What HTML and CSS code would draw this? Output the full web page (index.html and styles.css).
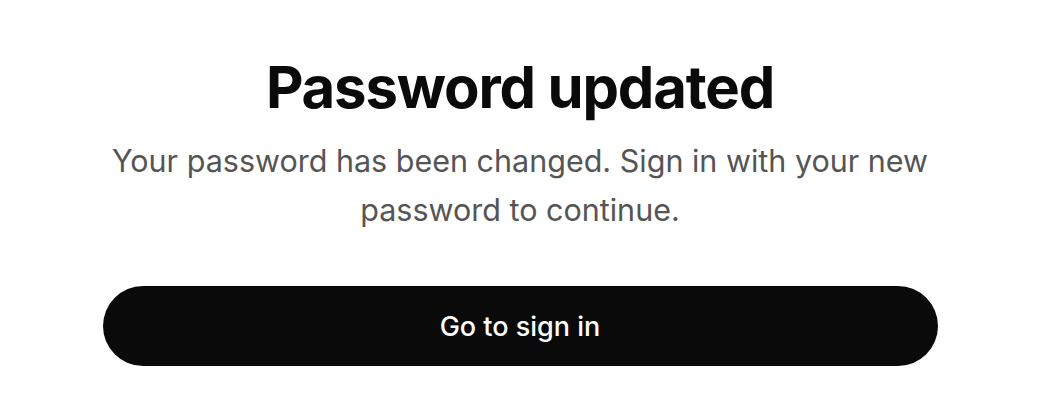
FILE: index.html
```html
<!DOCTYPE html>
<html lang="en">
<head>
<meta charset="utf-8">
<title>Password updated</title>
<link rel="stylesheet" href="styles.css">
</head>
<body>
<main class="card">
  <h1 class="title">Password updated</h1>
  <p class="message">Your password has been changed. Sign in with your new password to continue.</p>
  <button class="primary" type="button">Go to sign in</button>
</main>
</body>
</html>
```
FILE: styles.css
```css
html, body {
  margin: 0;
  padding: 0;
  background: #ffffff;
}
body {
  font-family: Inter, "Noto Sans", "Liberation Sans", sans-serif;
  color: #0a0a0a;
}
.card {
  width: 835px;
  margin: 0 auto;
  padding-top: 51px;
  display: flex;
  flex-direction: column;
  align-items: center;
  text-align: center;
}
.title {
  margin: 0;
  font-size: 58px;
  font-weight: 700;
  letter-spacing: -0.02em;
  line-height: 72px;
  color: #0a0a0a;
}
.message {
  margin: 13px 0 0;
  font-size: 30.5px;
  line-height: 49px;
  color: #555555;
  max-width: 835px;
}
.primary {
  margin-top: 52px;
  width: 100%;
  height: 80px;
  border: none;
  border-radius: 40px;
  background: #0a0a0a;
  color: #ffffff;
  font-family: inherit;
  font-size: 27px;
  font-weight: 500;
}
```
